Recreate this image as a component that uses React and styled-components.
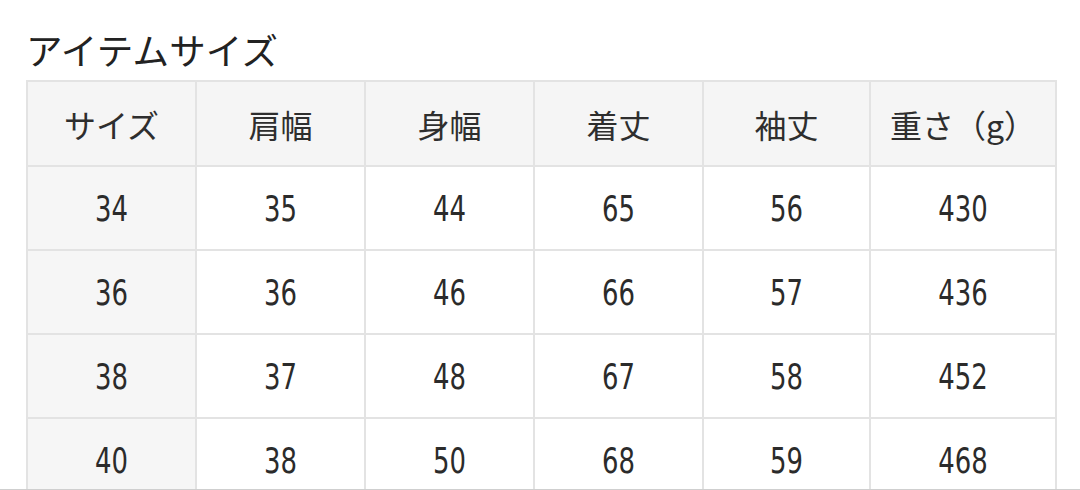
import React from "react";
import styled, { createGlobalStyle } from "styled-components";

const Global = createGlobalStyle`
  html, body { margin: 0; padding: 0; background: #fff; }
  body { font-family: "Noto Sans CJK JP", "Noto Sans", sans-serif; color: #333; }
`;

const Page = styled.div`
  width: 1080px;
  height: 490px;
  overflow: hidden;
  padding: 24px 0 0 26px;
  box-sizing: border-box;
  border-bottom: 1px solid #cfcfcf;
`;

const Title = styled.h2`
  margin: 0;
  font-size: 36.5px;
  font-weight: 400;
  line-height: 52px;
  height: 56px;
  color: #222;
  letter-spacing: 0.2px;
`;

const Table = styled.table`
  border-collapse: collapse;
  table-layout: fixed;
  width: 1029px;
`;

const Col = styled.col`
  width: ${(p) => p.$w}px;
`;

const HeadCell = styled.th`
  height: 83px;
  padding: 0;
  border: 2px solid #e3e3e3;
  background: #f5f5f5;
  font-weight: 400;
  font-size: 32px;
  color: #2e2e2e;
  text-align: center;
  vertical-align: middle;
`;

const Cell = styled.td`
  height: 82px;
  padding: 0;
  border: 2px solid #e3e3e3;
  background: ${(p) => (p.$first ? "#f6f6f6" : "#fff")};
  text-align: center;
  vertical-align: middle;
  font-family: "DejaVu Sans Condensed", "DejaVu Sans", sans-serif;
  font-size: 36px;
  color: #2b2b2b;
`;

const Num = styled.span`
  display: inline-block;
  transform: scaleX(0.8);
`;

const headers = ["サイズ", "肩幅", "身幅", "着丈", "袖丈", "重さ（g）"];
const rows = [
  ["34", "35", "44", "65", "56", "430"],
  ["36", "36", "46", "66", "57", "436"],
  ["38", "37", "48", "67", "58", "452"],
  ["40", "38", "50", "68", "59", "468"],
];
const widths = [169, 169, 169, 169, 167, 186];

export default function App() {
  return (
    <Page>
      <Global />
      <Title>アイテムサイズ</Title>
      <Table>
        <colgroup>
          {widths.map((w, i) => (
            <Col key={i} $w={w} />
          ))}
        </colgroup>
        <thead>
          <tr>
            {headers.map((h) => (
              <HeadCell key={h}>{h}</HeadCell>
            ))}
          </tr>
        </thead>
        <tbody>
          {rows.map((r, i) => (
            <tr key={i}>
              {r.map((v, j) => (
                <Cell key={j} $first={j === 0}>
                  <Num>{v}</Num>
                </Cell>
              ))}
            </tr>
          ))}
        </tbody>
      </Table>
    </Page>
  );
}
